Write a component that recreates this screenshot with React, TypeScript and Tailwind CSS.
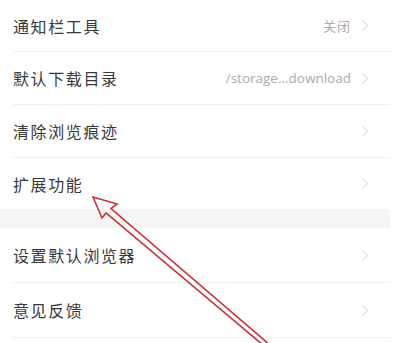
import React from "react";

type Item = { label: string; value?: string; h: string };

const groupA: Item[] = [
  { label: "通知栏工具", value: "关闭", h: "h-[52px]" },
  { label: "默认下载目录", value: "/storage...download", h: "h-[53px]" },
  { label: "清除浏览痕迹", h: "h-[53px]" },
  { label: "扩展功能", h: "h-[51px]" },
];

const groupB: Item[] = [
  { label: "设置默认浏览器", h: "h-[55px]" },
  { label: "意见反馈", h: "h-[55px]" },
];

const Chevron = () => (
  <svg width="8" height="13" viewBox="0 0 8 13" className="ml-[10px] shrink-0">
    <path d="M1.5 1.5 L6.5 6.5 L1.5 11.5" fill="none" stroke="#e0e0e0" strokeWidth="1.2" />
  </svg>
);

const Row = ({ item, last }: { item: Item; last?: boolean }) => (
  <div className="pl-[13px]">
    <div
      className={`flex ${item.h} items-center pr-[21px] ${last ? "" : "border-b border-[#f0f0f0]"}`}
    >
      <span className="flex-1 text-[16px] tracking-[1.6px] text-[#383838]">{item.label}</span>
      {item.value && (
        <span
          className={`text-[#aaaaaa] ${
            item.value.startsWith("/")
              ? "text-[13.5px] font-['Open_Sans',sans-serif]"
              : "text-[13px] tracking-[1px]"
          }`}
        >
          {item.value}
        </span>
      )}
      <Chevron />
    </div>
  </div>
);

const App: React.FC = () => {
  return (
    <div className="relative h-[343px] w-[398px] overflow-hidden bg-white font-['Noto_Sans_CJK_SC',sans-serif]">
      <div className="w-[390px]">
        {groupA.map((item, i) => (
          <Row key={item.label} item={item} last={i === groupA.length - 1} />
        ))}
        <div className="h-[19px] bg-[#f5f5f6]" />
        {groupB.map((item) => (
          <Row key={item.label} item={item} />
        ))}
      </div>

      {/* red annotation arrow */}
      <svg className="pointer-events-none absolute left-0 top-0" width="398" height="343" viewBox="0 0 398 343">
        <polygon
          points="93,197 117,204 111,208.5 270,345 263,345 106,213 102,218"
          fill="none"
          stroke="#c9323c"
          strokeWidth="1.6"
          strokeLinejoin="miter"
        />
      </svg>
    </div>
  );
};

export default App;
